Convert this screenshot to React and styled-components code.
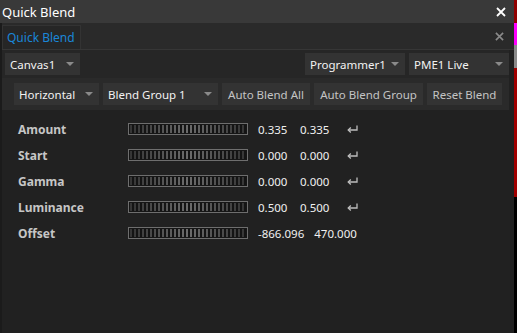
import React from 'react';
import styled, { createGlobalStyle } from 'styled-components';

const GlobalStyle = createGlobalStyle`
    html, body {
        margin: 0;
        padding: 0;
        background: #000;
    }
    body {
        font-family: "Noto Sans", "Open Sans", sans-serif;
        font-size: 12px;
    }
`

const Screen = styled.div`
    display: flex;
    width: 517px;
    height: 333px;
    overflow: hidden;
`

const Panel = styled.div`
    width: 514px;
    display: flex;
    flex-direction: column;
    background: #212121;
    border-left: 2px solid #1b1b1b;
    box-sizing: border-box;
`

const SideStrip = styled.div`
    width: 3px;
    background: linear-gradient(to bottom,
        #8f0000 0, #8f0000 23px,
        #ff00ff 23px, #ff00ff 45px,
        #8a8a8a 45px, #8a8a8a 68px,
        #a00000 68px, #a00000 197px,
        #000 197px);
`

const TitleBar = styled.div`
    height: 23px;
    background: #393939;
    display: flex;
    align-items: center;
    justify-content: space-between;
    padding: 0 8px 0 0;
    margin-left: -2px;
    color: #fff;
    font-size: 13px;
`

const TitleText = styled.span`
    padding-left: 2px;
`

const CloseIcon = ({ color, size }) => (
    <svg width={size} height={size} viewBox="0 0 10 10">
        <path d="M1 1 L9 9 M9 1 L1 9" stroke={color} strokeWidth="1.8" />
    </svg>
)

const TabBar = styled.div`
    height: 26px;
    background: #2a2a2a;
    display: flex;
    align-items: flex-end;
    justify-content: space-between;
    padding-right: 10px;
    border-bottom: 1px solid #363636;
`

const Tab = styled.div`
    height: 23px;
    padding: 0 5px 0 4px;
    display: flex;
    align-items: center;
    color: #1a86d8;
    background: #262626;
    border: 1px solid #333;
    border-bottom: none;
`

const TabClose = styled.div`
    align-self: center;
    display: flex;
`

const ToolRow = styled.div`
    display: flex;
    align-items: center;
    gap: 4px;
    padding: ${props => props.pad};
    margin-right: 5px;
    background: ${props => props.bg};
    font-size: 11.5px;
`

const Spacer = styled.div`
    flex: 1;
`

const Select = styled.div`
    width: ${props => props.w}px;
    height: 22px;
    box-sizing: border-box;
    background: #333333;
    color: #f2f2f2;
    display: flex;
    align-items: center;
    justify-content: space-between;
    padding: 0 6px 0 5px;
    white-space: nowrap;
`

const Caret = styled.span`
    width: 0;
    height: 0;
    border-left: 4px solid transparent;
    border-right: 4px solid transparent;
    border-top: 4px solid #8a8a8a;
`

const Button = styled.div`
    width: ${props => props.w}px;
    height: 22px;
    box-sizing: border-box;
    background: #333333;
    color: #c4c4c4;
    display: flex;
    align-items: center;
    justify-content: center;
    white-space: nowrap;
`

const Params = styled.div`
    display: flex;
    flex-direction: column;
    padding: 6px 0 0 16px;
`

const ParamRow = styled.div`
    display: flex;
    align-items: center;
    height: 26px;
`

const Label = styled.div`
    width: 110px;
    color: #c6c6c6;
    font-weight: bold;
`

const Slider = styled.div`
    width: 120px;
    height: 12px;
    box-sizing: border-box;
    border: 1px solid #6e6e6e;
    padding: 1px;
    background: #161616;
    margin-right: 10px;
`

const SliderFill = styled.div`
    height: 100%;
    background:
        repeating-linear-gradient(to right, transparent 0, transparent 2px, #141414 2px, #141414 4px),
        linear-gradient(to right, #353535, #6c6c6c 50%, #353535);
`

const Value = styled.div`
    min-width: 32px;
    margin-right: ${props => props.gap}px;
    color: #f0f0f0;
    font-size: 11.5px;
`

const ReturnIcon = () => (
    <svg width="13" height="10" viewBox="0 0 13 10">
        <path d="M11 1.5 V6 H2.5" stroke="#bdbdbd" strokeWidth="1.3" fill="none" />
        <path d="M4.8 3.5 L2.2 6 L4.8 8.5" stroke="#bdbdbd" strokeWidth="1.3" fill="none" />
    </svg>
)

const params = [
    ['Amount', '0.335', '0.335', true],
    ['Start', '0.000', '0.000', true],
    ['Gamma', '0.000', '0.000', true],
    ['Luminance', '0.500', '0.500', true],
    ['Offset', '-866.096', '470.000', false],
]

export default function App() {
    return (
        <Screen>
            <GlobalStyle />
            <Panel>
                <TitleBar>
                    <TitleText>Quick Blend</TitleText>
                    <CloseIcon color="#fff" size={10} />
                </TitleBar>
                <TabBar>
                    <Tab>Quick Blend</Tab>
                    <TabClose><CloseIcon color="#8a8a8a" size={9} /></TabClose>
                </TabBar>
                <ToolRow pad="3px 0 3px 3px" bg="#262626">
                    <Select w={75}>Canvas1<Caret /></Select>
                    <Spacer />
                    <Select w={100}>Programmer1<Caret /></Select>
                    <Select w={100}>PME1 Live<Caret /></Select>
                </ToolRow>
                <ToolRow pad="5px 0 5px 12px" bg="#2a2a2a">
                    <Select w={85}>Horizontal<Caret /></Select>
                    <Select w={115}>Blend Group 1<Caret /></Select>
                    <Button w={88}>Auto Blend All</Button>
                    <Button w={109}>Auto Blend Group</Button>
                    <Button w={75}>Reset Blend</Button>
                </ToolRow>
                <Params>
                    {params.map(([name, a, b, reset]) => (
                        <ParamRow key={name}>
                            <Label>{name}</Label>
                            <Slider><SliderFill /></Slider>
                            <Value gap={10}>{a}</Value>
                            <Value gap={14}>{b}</Value>
                            {reset && <ReturnIcon />}
                        </ParamRow>
                    ))}
                </Params>
            </Panel>
            <SideStrip />
        </Screen>
    )
}
